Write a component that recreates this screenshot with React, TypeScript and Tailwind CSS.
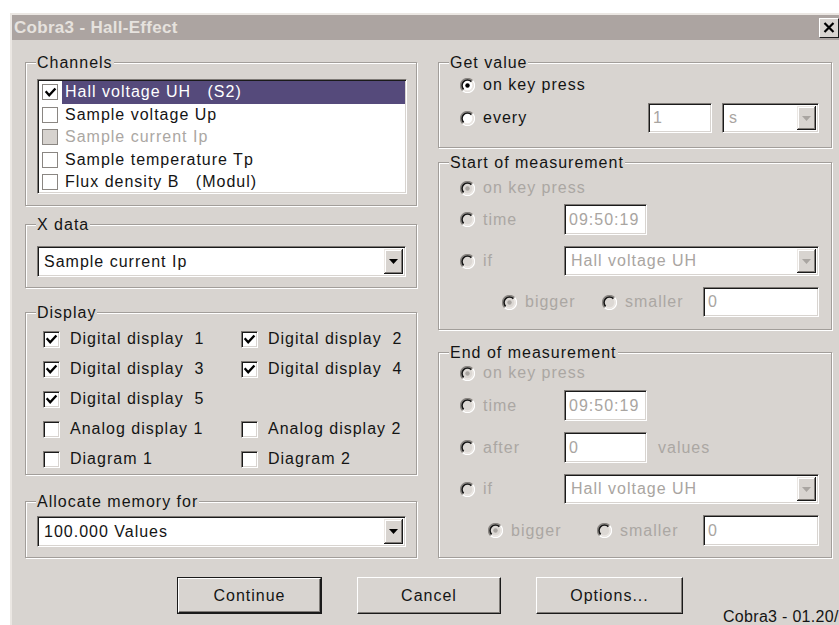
import React from "react";

const FACE = "bg-[#d8d4d0]";

function Group({
  label,
  className,
  children,
}: {
  label: string;
  className: string;
  children?: React.ReactNode;
}) {
  return (
    <div
      className={`relative border border-[#a29e9a] shadow-[inset_1px_1px_0_#ffffff,1px_1px_0_#ffffff] ${className}`}
    >
      <span className={`absolute left-[10px] top-[-9px] px-[1px] leading-[18px] ${FACE} text-[#141414]`}>
        {label}
      </span>
      {children}
    </div>
  );
}

function CheckMark() {
  return (
    <svg width="13" height="13" viewBox="0 0 13 13" className="block">
      <path d="M2.5 6.2 L5.2 9.2 L10.6 3.4" fill="none" stroke="#000" strokeWidth="2.4" strokeLinecap="square" />
    </svg>
  );
}

function Checkbox({ checked }: { checked: boolean }) {
  return (
    <div className="flex h-[17px] w-[17px] shrink-0 items-center justify-center border border-t-[#7e7a76] border-l-[#7e7a76] border-r-white border-b-white bg-white shadow-[inset_1px_1px_0_#1a1a1a,inset_-1px_-1px_0_#d8d4d0]">
      {checked && <CheckMark />}
    </div>
  );
}

function FlatCheck({ checked, disabled }: { checked?: boolean; disabled?: boolean }) {
  return (
    <div
      className={`flex h-[16px] w-[16px] shrink-0 items-center justify-center border border-[#8a8682] ${
        disabled ? "bg-[#d6d2ce]" : "bg-white"
      }`}
    >
      {checked && <CheckMark />}
    </div>
  );
}

function Radio({ checked, disabled }: { checked?: boolean; disabled?: boolean }) {
  return (
    <svg width="15" height="15" viewBox="0 0 15 15" className="block shrink-0">
      <circle cx="7.5" cy="7.5" r="5.5" fill={disabled ? "#dcd8d4" : "#ffffff"} />
      {/* lower-right light rim */}
      <path d="M12.45 2.55 A7 7 0 0 1 2.55 12.45" fill="none" stroke="#ffffff" strokeWidth="1.4" />
      <path d="M11.39 3.61 A5.5 5.5 0 0 1 3.61 11.39" fill="none" stroke="#ebe7e3" strokeWidth="1.4" />
      {/* upper-left dark rim */}
      <path d="M2.55 12.45 A7 7 0 0 1 12.45 2.55" fill="none" stroke="#8a8682" strokeWidth="1.4" />
      <path d="M3.61 11.39 A5.5 5.5 0 0 1 11.39 3.61" fill="none" stroke="#141414" strokeWidth="1.6" />
      {checked && <circle cx="7.5" cy="7.5" r="2.2" fill={disabled ? "#a9a5a1" : "#000000"} />}
    </svg>
  );
}

function RadioRow({
  label,
  checked,
  disabled,
  className = "",
}: {
  label: string;
  checked?: boolean;
  disabled?: boolean;
  className?: string;
}) {
  return (
    <div className={`flex shrink-0 items-center gap-[8px] ${className}`}>
      <Radio checked={checked} disabled={disabled} />
      <span className={`leading-[18px] ${disabled ? "text-[#aba7a3]" : "text-[#141414]"}`}>{label}</span>
    </div>
  );
}

const SUNKEN =
  "border border-t-[#7e7a76] border-l-[#7e7a76] border-r-white border-b-white bg-white shadow-[inset_1px_1px_0_#1a1a1a,inset_-1px_-1px_0_#d8d4d0]";

function TextField({ value, className }: { value: string; className: string }) {
  return (
    <div className={`flex shrink-0 items-center pl-[4px] text-[#a9a5a1] ${SUNKEN} ${className}`}>
      <span className="leading-[18px]">{value}</span>
    </div>
  );
}

function Select({
  value,
  disabled,
  className,
}: {
  value: string;
  disabled?: boolean;
  className: string;
}) {
  return (
    <div className={`flex shrink-0 items-stretch p-[2px] ${SUNKEN} ${className}`}>
      <div className={`flex flex-1 items-center pl-[4px] leading-[18px] ${disabled ? "text-[#a9a5a1]" : "text-[#141414]"}`}>
        {value}
      </div>
      <div className={`flex w-[19px] items-center justify-center ${FACE} shadow-[inset_-1px_-1px_0_#1a1a1a,inset_1px_1px_0_#ebe7e3,inset_-2px_-2px_0_#807c78,inset_2px_2px_0_#ffffff]`}>
        <svg width="9" height="5" viewBox="0 0 9 5" className="block">
          <polygon points="0,0 9,0 4.5,5" fill={disabled ? "#a9a5a1" : "#000000"} />
        </svg>
      </div>
    </div>
  );
}

function Button({ label, isDefault, className }: { label: string; isDefault?: boolean; className: string }) {
  const inner = (
    <div className={`flex h-full w-full items-center justify-center ${FACE} border border-t-white border-l-white border-r-[#1a1a1a] border-b-[#1a1a1a] shadow-[inset_-1px_-1px_0_#807c78] leading-[18px] text-[#141414]`}>
      {label}
    </div>
  );
  return isDefault ? (
    <div className={`shrink-0 border border-[#1a1a1a] ${className}`}>{inner}</div>
  ) : (
    <div className={`shrink-0 ${className}`}>{inner}</div>
  );
}

const channels = [
  { label: "Hall voltage UH   (S2)", checked: true, selected: true },
  { label: "Sample voltage Up" },
  { label: "Sample current Ip", disabled: true },
  { label: "Sample temperature Tp" },
  { label: "Flux density B   (Modul)" },
];

const displays: (null | { label: string; checked: boolean })[] = [
  { label: "Digital display  1", checked: true },
  { label: "Digital display  2", checked: true },
  { label: "Digital display  3", checked: true },
  { label: "Digital display  4", checked: true },
  { label: "Digital display  5", checked: true },
  null,
  { label: "Analog display 1", checked: false },
  { label: "Analog display 2", checked: false },
  { label: "Diagram 1", checked: false },
  { label: "Diagram 2", checked: false },
];

export default function App() {
  return (
    <div className="h-[625px] w-[839px] overflow-hidden bg-white font-['Liberation_Sans',Arial,sans-serif] text-[16px] tracking-[1px] text-[#141414]">
      <div className={`ml-[10px] mt-[13px] h-[620px] w-[829px] overflow-hidden border-l-2 border-t-2 border-[#ebe7e3] ${FACE}`}>
        {/* title bar */}
        <div className="flex h-[25px] items-center justify-between bg-[#aca4a1] pl-[2px]">
          <span className="text-[17px] font-bold tracking-[0.3px] text-[#e6e2de] leading-[20px]">
            Cobra3 - Hall-Effect
          </span>
          <div className={`flex h-[20px] w-[20px] items-center justify-center ${FACE} border border-t-white border-l-white border-r-[#1a1a1a] border-b-[#1a1a1a]`}>
            <svg width="12" height="11" viewBox="0 0 12 11" className="block">
              <path d="M1.5 1 L10.5 10 M10.5 1 L1.5 10" stroke="#000" strokeWidth="2.2" />
            </svg>
          </div>
        </div>

        <div className="flex flex-col pl-[13px] pt-[22px]">
          <div className="flex gap-[21px]">
            {/* left column */}
            <div className="flex w-[392px] shrink-0 flex-col">
              <Group label="Channels" className="h-[144px] pl-[11px] pt-[16px]">
                <div className={`h-[115px] w-[370px] pt-[1px] ${SUNKEN}`}>
                  {channels.map((c) => (
                    <div key={c.label} className="flex h-[22.5px] items-center pl-[4px] pr-[1px]">
                      <FlatCheck checked={c.checked} disabled={c.disabled} />
                      <div
                        className={`ml-[4px] flex h-full flex-1 items-center whitespace-pre pl-[3px] leading-[18px] ${
                          c.selected ? "bg-[#554a7b] text-white" : c.disabled ? "text-[#aba7a3]" : "text-[#141414]"
                        }`}
                      >
                        {c.label}
                      </div>
                    </div>
                  ))}
                </div>
              </Group>

              <Group label="X data" className="mt-[18px] h-[64px] pl-[11px] pt-[21px]">
                <Select value="Sample current Ip" className="h-[31px] w-[369px]" />
              </Group>

              <Group label="Display" className="mt-[24px] h-[163px] pl-[17px] pt-[11px]">
                <div className="grid grid-cols-[198px_150px]">
                  {displays.map((d, i) =>
                    d ? (
                      <div key={i} className="flex h-[30px] items-center gap-[10px]">
                        <Checkbox checked={d.checked} />
                        <span className="whitespace-pre leading-[18px]">{d.label}</span>
                      </div>
                    ) : (
                      <div key={i} className="h-[30px]" />
                    )
                  )}
                </div>
              </Group>

              <Group label="Allocate memory for" className="mt-[26px] h-[57px] pl-[11px] pt-[14px]">
                <Select value="100.000 Values" className="h-[31px] w-[369px]" />
              </Group>
            </div>

            {/* right column */}
            <div className="flex w-[394px] shrink-0 flex-col">
              <Group label="Get value" className="h-[86px] pl-[21px] pt-[10px]">
                <RadioRow label="on key press" checked className="h-[24px]" />
                <div className="mt-[6px] flex h-[30px] items-center">
                  <RadioRow label="every" className="w-[188px]" />
                  <TextField value="1" className="h-[30px] w-[64px]" />
                  <Select value="s" disabled className="ml-[10px] h-[30px] w-[97px]" />
                </div>
              </Group>

              <Group label="Start of measurement" className="mt-[14px] h-[168px] pl-[21px] pt-[13px]">
                <RadioRow label="on key press" checked disabled className="h-[24px]" />
                <div className="mt-[4px] flex h-[31px] items-center">
                  <RadioRow label="time" disabled className="w-[104px]" />
                  <TextField value="09:50:19" className="h-[31px] w-[83px]" />
                </div>
                <div className="mt-[11px] flex h-[30px] items-center">
                  <RadioRow label="if" disabled className="w-[104px]" />
                  <Select value="Hall voltage UH" disabled className="h-[30px] w-[255px]" />
                </div>
                <div className="mt-[11px] flex h-[30px] items-center pl-[42px]">
                  <RadioRow label="bigger" checked disabled className="w-[100px]" />
                  <RadioRow label="smaller" disabled className="w-[101px]" />
                  <TextField value="0" className="h-[30px] w-[116px]" />
                </div>
              </Group>

              <Group label="End of measurement" className="mt-[22px] h-[206px] pl-[21px] pt-[8px]">
                <RadioRow label="on key press" checked disabled className="h-[24px]" />
                <div className="mt-[5px] flex h-[31px] items-center">
                  <RadioRow label="time" disabled className="w-[104px]" />
                  <TextField value="09:50:19" className="h-[31px] w-[83px]" />
                </div>
                <div className="mt-[11px] flex h-[31px] items-center">
                  <RadioRow label="after" disabled className="w-[104px]" />
                  <TextField value="0" className="h-[31px] w-[83px]" />
                  <span className="ml-[11px] leading-[18px] text-[#aba7a3]">values</span>
                </div>
                <div className="mt-[11px] flex h-[30px] items-center">
                  <RadioRow label="if" disabled className="w-[104px]" />
                  <Select value="Hall voltage UH" disabled className="h-[30px] w-[255px]" />
                </div>
                <div className="mt-[11px] flex h-[31px] items-center pl-[28px]">
                  <RadioRow label="bigger" checked disabled className="w-[109px]" />
                  <RadioRow label="smaller" disabled className="w-[106px]" />
                  <TextField value="0" className="h-[31px] w-[116px]" />
                </div>
              </Group>
            </div>
          </div>

          {/* dialog buttons */}
          <div className="mt-[19px] flex items-start pl-[152px]">
            <Button label="Continue" isDefault className="h-[37px] w-[145px]" />
            <Button label="Cancel" className="ml-[35px] h-[37px] w-[144px]" />
            <Button label="Options..." className="ml-[35px] h-[37px] w-[147px]" />
            <span className="ml-[40px] mt-[31px] shrink-0 whitespace-nowrap leading-[18px] tracking-[0.3px]">Cobra3 - 01.20/02</span>
          </div>
        </div>
      </div>
    </div>
  );
}
